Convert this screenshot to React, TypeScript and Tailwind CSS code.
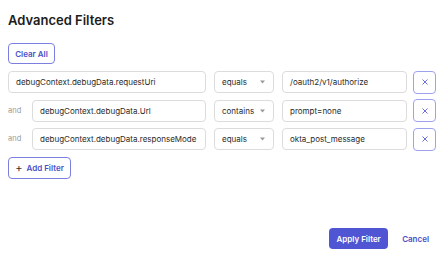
import React from "react";

function Chevron() {
  return (
    <svg width="5" height="4" viewBox="0 0 5 4" className="text-[#9a9a9a]">
      <path d="M0 0.5 L5 0.5 L2.5 3.5 Z" fill="currentColor" />
    </svg>
  );
}

function XIcon() {
  return (
    <svg width="6" height="6" viewBox="0 0 6 6">
      <path d="M0.75 0.75 L5.25 5.25 M5.25 0.75 L0.75 5.25" stroke="#6c71d8" strokeWidth="1" strokeLinecap="round" />
    </svg>
  );
}

const rows = [
  { label: "", field: "debugContext.debugData.requestUri", op: "equals", value: "/oauth2/v1/authorize" },
  { label: "and", field: "debugContext.debugData.Url", op: "contains", value: "prompt=none" },
  { label: "and", field: "debugContext.debugData.responseMode", op: "equals", value: "okta_post_message" },
];

export default function App() {
  return (
    <div
      className="w-[446px] h-[259px] bg-white text-[#2b2b2b] pl-[8px] pr-[10px] pt-[11px] flex flex-col"
      style={{ fontFamily: "Inter, 'Noto Sans', sans-serif" }}
    >
      <h1 className="text-[13px] leading-[18px] font-semibold text-[#1d1d1d]">Advanced Filters</h1>
      <div className="mt-[14px] flex">
        <button className="h-[21px] w-[47px] rounded-[4px] border border-[#7b80e0] text-[#4a50c8] text-[8px] font-semibold">
          Clear All
        </button>
      </div>
      <div className="mt-[7px] flex flex-col gap-[6.5px]">
        {rows.map((r, i) => (
          <div key={i} className="flex items-center h-[22px]">
            {r.label ? (
              <>
                <span className="w-[24px] text-[7.5px] text-[#9a9a9a]">{r.label}</span>
                <div className="w-[174px] h-[22px] border border-[#dcdcdc] rounded-[4px] flex items-center pl-[7px] text-[8px] whitespace-nowrap">
                  {r.field}
                </div>
              </>
            ) : (
              <div className="w-[198px] h-[22px] border border-[#dcdcdc] rounded-[4px] flex items-center pl-[7px] text-[8px] whitespace-nowrap">
                {r.field}
              </div>
            )}
            <div className="ml-[8px] w-[60px] h-[22px] border border-[#dcdcdc] rounded-[4px] flex items-center justify-between pl-[7px] pr-[8px] text-[8px]">
              <span>{r.op}</span>
              <Chevron />
            </div>
            <div className="ml-[8px] w-[125px] h-[22px] border border-[#dcdcdc] rounded-[4px] flex items-center pl-[7px] text-[8px]">
              {r.value}
            </div>
            <button className="ml-[6px] w-[23px] h-[23px] border border-[#9ea2ec] rounded-[4px] flex items-center justify-center">
              <XIcon />
            </button>
          </div>
        ))}
      </div>
      <div className="mt-[7px] flex">
        <button className="h-[22px] w-[63px] rounded-[4px] border border-[#7b80e0] text-[#4a50c8] text-[8px] font-semibold flex items-center justify-center gap-[4px]">
          <span className="text-[#333] text-[11px] font-normal leading-none">+</span>
          Add Filter
        </button>
      </div>
      <div className="mt-[49px] flex items-center justify-end">
        <button className="h-[21px] w-[59px] rounded-[4px] bg-[#4f55d3] text-white text-[8px] font-semibold">
          Apply Filter
        </button>
        <button className="ml-[14px] mr-[7px] text-[#4a50c8] text-[8px] font-semibold">Cancel</button>
      </div>
    </div>
  );
}
